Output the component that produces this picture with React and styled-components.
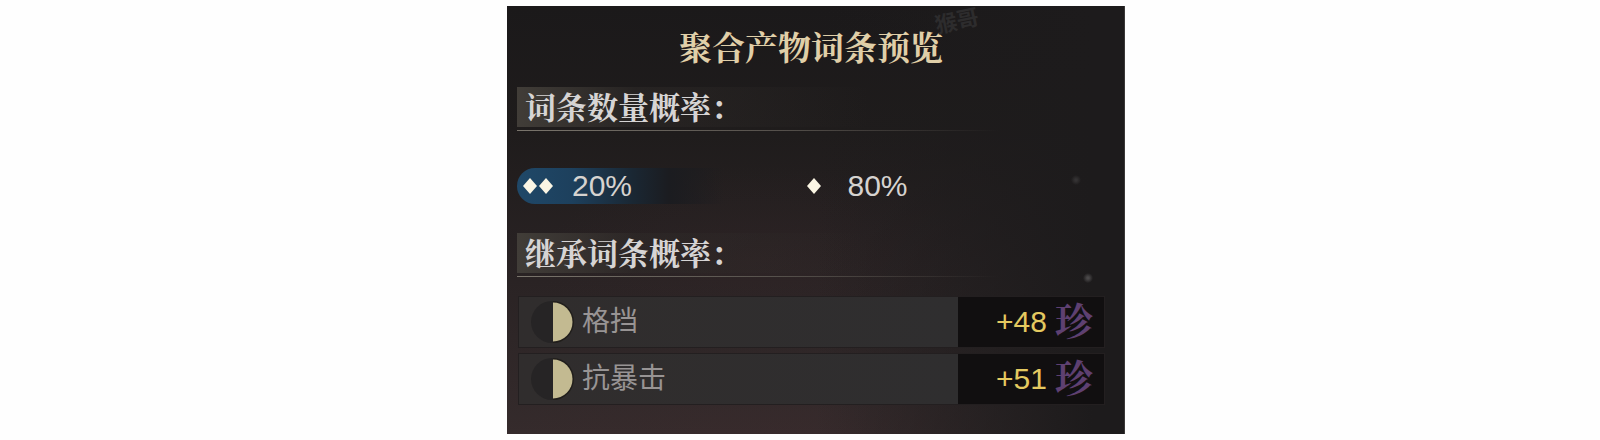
import React from 'react'
import styled, { createGlobalStyle } from 'styled-components'

const odds = [
  { diamonds: 2, chance: '20%', active: true },
  { diamonds: 1, chance: '80%', active: false },
]

const affixes = [
  { name: '格挡', value: '+48', rarity: '珍' },
  { name: '抗暴击', value: '+51', rarity: '珍' },
]

function Diamond() {
  return (
    <svg width="16" height="18" viewBox="0 0 16 18" aria-hidden="true">
      <path d="M8 1 L15 9 L8 17 L1 9 Z" fill="#fbf6e4" />
    </svg>
  )
}

function HalfMoon() {
  return (
    <svg width="44" height="44" viewBox="0 0 44 44" aria-hidden="true">
      <circle cx="22" cy="22" r="21" fill="#262425" />
      <path d="M23 1 A21 21 0 0 1 23 43 Z" fill="#211e1b" />
      <path d="M23 2.500 A19.500 19.500 0 0 1 23 41.500 Z" fill="#c3ba91" />
    </svg>
  )
}

function App() {
  return (
    <Page>
      <GlobalStyle />
      <Panel>
        <Watermark>猴哥</Watermark>
        <Title>聚合产物词条预览</Title>

        <section>
          <Heading>词条数量概率：</Heading>
          <Odds>
            {odds.map((item) => (
              <Chance key={item.chance} $active={item.active}>
                <Diamonds>
                  {Array.from({ length: item.diamonds }, (_, i) => (
                    <Diamond key={i} />
                  ))}
                </Diamonds>
                <span>{item.chance}</span>
              </Chance>
            ))}
          </Odds>
        </section>

        <section>
          <Heading>继承词条概率：</Heading>
          <Affixes>
            {affixes.map((item) => (
              <Affix key={item.name}>
                <Name>
                  <HalfMoon />
                  <span>{item.name}</span>
                </Name>
                <Value>
                  <span>{item.value}</span>
                  <Rarity>{item.rarity}</Rarity>
                </Value>
              </Affix>
            ))}
          </Affixes>
        </section>
      </Panel>
    </Page>
  )
}

const serif = `'Liberation Serif', 'Noto Serif CJK SC', 'Noto Sans CJK SC', serif`
const sans = `'Liberation Sans', 'Noto Sans CJK SC', sans-serif`

const GlobalStyle = createGlobalStyle`
* {
    box-sizing: border-box;
    margin: 0;
    padding: 0;
}
body {
    background: #fefefe;
    font-family: ${sans};
}
svg {
    display: block;
    flex: none;
}
`

const Page = styled.main`
display: flex;
justify-content: center;
padding: 6px 0 6px 32px;
`

const Panel = styled.div`
position: relative;
width: 100%;
max-width: 618px;
padding: 20px 19px 29px 10px;
border-right: 1px solid #3a3838;
background:
    radial-gradient(circle at 569px 174px, #343233 0 1px, transparent 5px),
    radial-gradient(circle at 581px 272px, #4a4849 0 1px, transparent 5px),
    linear-gradient(90deg, #1d1b1c00 50%, #1d1b1c 95%),
    radial-gradient(ellipse 220px 100px at 250px 260px, #35262850, #35262800),
    radial-gradient(ellipse 260px 60px at 270px 427px, #3d292c50, #3d292c00),
    linear-gradient(180deg, #1b191a 0%, #1f1c1c 30%, #272122 55%, #352b2c 100%);
`

const Watermark = styled.span`
position: absolute;
top: 4px;
right: 145px;
color: #2d2c2d;
font-size: 22px;
font-weight: 700;
line-height: 24px;
transform: rotate(-12deg);
`

const Title = styled.h1`
color: #e0cfa8;
font-family: ${serif};
font-size: 33px;
font-weight: 700;
line-height: 46px;
text-align: center;
`

const Heading = styled.h2`
margin-top: 13px;
padding: 3px 8px 1px;
border-bottom: 1px solid;
border-image: linear-gradient(90deg, #7a756c, #55504b 45%, #55504b00 82%) 1;
background: linear-gradient(90deg, #413d38, #2f2b2980 20%, #2c282700 60%) 0 2px / 100% 40px no-repeat;
color: #d6d4d4;
font-family: ${serif};
font-size: 31px;
font-weight: 700;
line-height: 41px;
`

const Odds = styled.ul`
display: grid;
grid-template-columns: 1fr 1fr;
padding: 37px 37px 14px 0;
list-style: none;
`

const Chance = styled.li`
display: flex;
align-items: center;
gap: 16px;
height: 36px;
padding-left: 3px;
border-radius: 18px 0 0 18px;
background: ${(props) => (props.$active
    ? 'linear-gradient(90deg, #1f4868 0%, #1d405d 20%, #1a2733 42%, #1b1c20 55%, #1b1c2000 75%)'
    : 'none')};
color: #d6d3d0;
font-size: 30px;
line-height: 36px;
`

const Diamonds = styled.span`
display: flex;
justify-content: center;
width: 36px;
`

const Affixes = styled.ul`
display: grid;
gap: 5px;
padding: 19px 0 0 1px;
list-style: none;
`

const Affix = styled.li`
display: grid;
grid-template-columns: 3fr 1fr;
border: 1px solid #231f20;
`

const Name = styled.div`
display: flex;
align-items: center;
gap: 8px;
height: 50px;
padding-left: 11px;
background: linear-gradient(90deg, #302d2d, #2f2e2f);
color: #989494;
font-size: 28px;
line-height: 40px;
`

const Value = styled.div`
display: flex;
align-items: center;
justify-content: flex-end;
gap: 8px;
padding-right: 11px;
background: #110f10;
color: #e4c960;
font-size: 30px;
`

const Rarity = styled.span`
color: #5e4071;
font-family: ${serif};
font-size: 38px;
font-weight: 700;
line-height: 50px;
`

export default App
